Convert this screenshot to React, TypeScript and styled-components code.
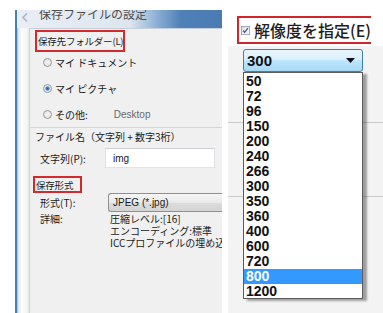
import React from 'react'
import styled, { createGlobalStyle } from 'styled-components'

const GlobalStyle = createGlobalStyle`
    html, body {
        margin: 0;
        padding: 0;
        background: #ffffff;
    }
    body {
        width: 383px;
        height: 313px;
        overflow: hidden;
        font-family: "Noto Sans CJK JP", "Liberation Sans", sans-serif;
        color: #1b1b1b;
    }
`

const Page = styled.div`
    display: flex;
    height: 313px;
    padding-left: 15px;
    box-sizing: border-box;
`

// ---- left dialog ----

const Window = styled.div`
    width: 207px;
    flex: none;
    margin-top: 10px;
    display: flex;
    flex-direction: column;
    border-left: 2px solid #4681b4;
    box-sizing: border-box;
    overflow: hidden;
`

const TitleBar = styled.div`
    height: 18px;
    flex: none;
    display: flex;
    align-items: flex-start;
    overflow: hidden;
    padding-left: 4px;
    background: linear-gradient(to right, #e9eef4 0%, #dde6ef 55%, #8eb0d4 68%, #4f80b8 80%, #4a7bb3 100%);
`

const BackArrow = styled.svg`
    margin: 3px 11px 0 1px;
    flex: none;
`

const TitleText = styled.span`
    margin-top: -3px;
    font-size: 12px;
    line-height: 14px;
    color: #4d4d4d;
    white-space: nowrap;
`

const WindowBody = styled.div`
    flex: 1;
    display: flex;
    min-height: 0;
`

const Frame = styled.div`
    width: 12px;
    flex: none;
    background: linear-gradient(to right, #9cc0dc 0px, #e6f0f6 2px, #fbfcf8 5px, #f4f6f0 10px, #e3e8ec 12px);
`

const Content = styled.div`
    flex: 1;
    min-width: 0;
    display: flex;
    flex-direction: column;
    overflow: hidden;
    background: #f0f0f0;
    border-top: 1px solid #c3d0dc;
    border-left: 1px solid #cbd6e0;
    font-size: 10px;
`

const Highlight = styled.div<{ $w: number; $h: number; $ml: number; $mt: number }>`
    width: ${p => p.$w}px;
    height: ${p => p.$h}px;
    flex: none;
    margin: ${p => p.$mt}px 0 0 ${p => p.$ml}px;
    box-sizing: border-box;
    border: 2px solid #d32a2e;
    display: flex;
    align-items: center;
    padding-left: 1px;
    white-space: nowrap;
    font-size: 9.5px;
    letter-spacing: -0.2px;
    color: #1b1b1b;
`

const RadioGroup = styled.div`
    display: flex;
    flex-direction: column;
    gap: 6px;
    padding-left: 13px;
`

const RadioRow = styled.label`
    height: 20px;
    display: flex;
    align-items: center;
    gap: 3px;
    white-space: nowrap;
`

const RadioDot = styled.span<{ $on?: boolean }>`
    width: 7px;
    height: 7px;
    border-radius: 50%;
    border: 1px solid #9a9a9a;
    background: ${p => p.$on
        ? 'radial-gradient(circle, #1f5fa8 0, #3b86d0 1.6px, #e8eef4 2.6px, #dcdcdc 100%)'
        : 'radial-gradient(circle, #f6f6f6 0, #dcdcdc 100%)'};
    flex: none;
`

const Muted = styled.span`
    margin-left: 23px;
    color: #6a6a6a;
    font-family: "Liberation Sans", sans-serif;
`

const Divider = styled.div<{ $mt: number }>`
    margin-top: ${p => p.$mt}px;
    border-top: 1px solid #d6d6d6;
`

const SectionTitle = styled.div`
    margin-top: 2px;
    padding-left: 5px;
    height: 14px;
    line-height: 14px;
    white-space: nowrap;
`

const FieldRow = styled.div<{ $mt: number; $h: number }>`
    margin-top: ${p => p.$mt}px;
    height: ${p => p.$h}px;
    flex: none;
    display: flex;
    align-items: center;
    padding-left: 10px;
`

const FieldLabel = styled.span`
    width: 65px;
    flex: none;
    white-space: nowrap;
`

const TextBox = styled.div`
    width: 110px;
    height: 20px;
    box-sizing: border-box;
    background: #ffffff;
    border: 1px solid #dfe3e8;
    border-top-color: #c9ced4;
    display: flex;
    align-items: center;
    padding-left: 7px;
    font-family: "Liberation Sans", sans-serif;
    font-size: 10px;
`

const SelectBox = styled.div`
    flex: 1;
    margin-left: 3px;
    height: 19px;
    box-sizing: border-box;
    border: 1px solid #8e8f8f;
    border-right: none;
    border-radius: 3px 0 0 3px;
    background: linear-gradient(#f6f6f6, #e9e9e9 50%, #dcdcdc 51%, #d4d4d4);
    display: flex;
    align-items: center;
    padding-left: 4px;
    font-family: "Liberation Sans", sans-serif;
    font-size: 10px;
    white-space: nowrap;
`

const DetailRow = styled.div`
    margin-top: 1px;
    display: flex;
    padding-left: 10px;
    line-height: 12px;
`

const DetailLabel = styled.span`
    width: 70px;
    flex: none;
`

const DetailText = styled.div`
    flex: 1;
    min-width: 0;
    white-space: nowrap;
    overflow: hidden;
`

// ---- right pane ----

const RightPane = styled.div`
    flex: 1;
    min-width: 0;
    display: flex;
    flex-direction: column;
`

const CheckFrame = styled.div`
    width: 134px;
    height: 28px;
    margin: 16px 0 0 15px;
    box-sizing: border-box;
    border: 2px solid #d0262b;
    border-right: none;
    display: flex;
    align-items: center;
    gap: 4px;
    padding-left: 2px;
    font-size: 16px;
    font-weight: 500;
    color: #1e1e1e;
    white-space: nowrap;
`

const Behind = styled.div`
    position: relative;
    flex: 1;
    margin: 2px 0 0 6px;
    padding-top: 3px;
    background: #f3f3f3;
`

const Combo = styled.div`
    width: 120px;
    height: 23px;
    margin-left: 15px;
    box-sizing: border-box;
    border: 1px solid #3c7fb1;
    border-radius: 3px;
    background: linear-gradient(#eaf6fd, #d9f0fc 45%, #bee6fd 50%, #a7d9f5);
    display: flex;
    align-items: center;
    justify-content: space-between;
    padding: 0 7px 0 3px;
    font-family: "Liberation Sans", sans-serif;
    font-size: 15px;
    font-weight: bold;
    color: #111;
`

const RuleBlock = styled.div<{ $h: number }>`
    height: ${p => p.$h}px;
    border-bottom: 1px solid #c9c9c9;
`

const DropList = styled.ul`
    position: absolute;
    top: 26px;
    left: 15px;
    width: 120px;
    height: 227px;
    margin: 0;
    padding: 1px 0 0;
    box-sizing: border-box;
    list-style: none;
    background: #ffffff;
    border: 1px solid #5c5c5c;
    box-shadow: 4px 2px 2px rgba(0, 0, 0, 0.35);
`

const DropItem = styled.li<{ $active?: boolean }>`
    height: 15px;
    line-height: 15px;
    padding-left: 2px;
    font-family: "Liberation Sans", sans-serif;
    font-size: 14px;
    font-weight: bold;
    color: ${p => (p.$active ? '#ffffff' : '#111111')};
    background: ${p => (p.$active ? '#3399ff' : 'transparent')};
`

const resolutions = ['50', '72', '96', '150', '200', '240', '266', '300', '350', '360', '400', '600', '720', '800', '1200']

function CheckIcon() {
    return (
        <svg width="13" height="13" viewBox="0 0 13 13">
            <defs>
                <linearGradient id="cbg" x1="0" y1="0" x2="1" y2="1">
                    <stop offset="0" stopColor="#dcdcdc" />
                    <stop offset="1" stopColor="#fbfbfb" />
                </linearGradient>
            </defs>
            <rect x="0.5" y="0.5" width="12" height="12" fill="url(#cbg)" stroke="#8e8fa8" />
            <path d="M3 6.5 L5.3 9.2 L10 3.2" fill="none" stroke="#4054a8" strokeWidth="1.8" />
        </svg>
    )
}

export default function App() {
    return (
        <>
            <GlobalStyle />
            <Page>
                <Window>
                    <TitleBar>
                        <BackArrow width="6" height="9" viewBox="0 0 6 9">
                            <path d="M5 0.5 L1 4.5 L5 8.5" fill="none" stroke="#a9b8c8" strokeWidth="1.6" />
                        </BackArrow>
                        <TitleText>保存ファイルの設定</TitleText>
                    </TitleBar>
                    <WindowBody>
                        <Frame />
                        <Content>
                            <Highlight $w={90} $h={22} $ml={5} $mt={1}>保存先フォルダー(L)</Highlight>
                            <RadioGroup>
                                <RadioRow><RadioDot />マイ ドキュメント</RadioRow>
                                <RadioRow><RadioDot $on />マイ ピクチャ</RadioRow>
                                <RadioRow><RadioDot />その他:<Muted>Desktop</Muted></RadioRow>
                            </RadioGroup>
                            <Divider $mt={3} />
                            <SectionTitle>ファイル名（文字列 + 数字3桁）</SectionTitle>
                            <FieldRow $mt={4} $h={20}>
                                <FieldLabel>文字列(P):</FieldLabel>
                                <TextBox>img</TextBox>
                            </FieldRow>
                            <Highlight $w={49} $h={17} $ml={3} $mt={8}>保存形式</Highlight>
                            <FieldRow $mt={0} $h={19}>
                                <FieldLabel>形式(T):</FieldLabel>
                                <SelectBox>JPEG (*.jpg)</SelectBox>
                            </FieldRow>
                            <DetailRow>
                                <DetailLabel>詳細:</DetailLabel>
                                <DetailText>
                                    圧縮レベル:[16]<br />
                                    エンコーディング:標準<br />
                                    ICCプロファイルの埋め込み
                                </DetailText>
                            </DetailRow>
                        </Content>
                    </WindowBody>
                </Window>

                <RightPane>
                    <CheckFrame>
                        <CheckIcon />
                        解像度を指定(E)
                    </CheckFrame>
                    <Behind>
                        <Combo>
                            300
                            <svg width="9" height="5" viewBox="0 0 9 5">
                                <path d="M0 0 H9 L4.5 5 Z" fill="#111" />
                            </svg>
                        </Combo>
                        <RuleBlock $h={50} />
                        <RuleBlock $h={73} />
                        <DropList>
                            {resolutions.map(r => (
                                <DropItem key={r} $active={r === '800'}>{r}</DropItem>
                            ))}
                        </DropList>
                    </Behind>
                </RightPane>
            </Page>
        </>
    )
}
